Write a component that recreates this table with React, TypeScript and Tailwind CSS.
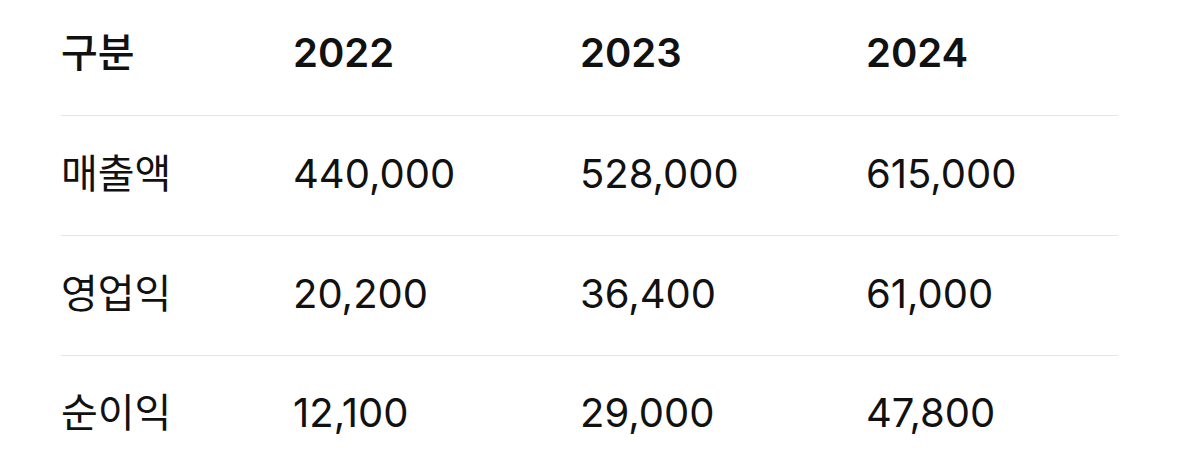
const rows = [
  { label: '매출액', values: ['440,000', '528,000', '615,000'] },
  { label: '영업익', values: ['20,200', '36,400', '61,000'] },
  { label: '순이익', values: ['12,100', '29,000', '47,800'] },
];

export default function App() {
  return (
    <div
      className="h-[475px] w-[1179px] bg-white px-[61px] text-[#111111]"
      style={{ fontFamily: 'Inter, "Noto Sans CJK KR", sans-serif' }}
    >
      <table className="w-full table-fixed border-collapse text-left text-[40px] leading-none">
        <colgroup>
          <col className="w-[232px]" />
          <col className="w-[287px]" />
          <col className="w-[286px]" />
          <col />
        </colgroup>
        <thead>
          <tr className="h-[115px] border-b border-[#e4e4e4]">
            <th className="pb-[8px] font-medium">구분</th>
            <th className="pb-[8px] font-semibold">2022</th>
            <th className="pb-[8px] font-semibold">2023</th>
            <th className="pb-[8px] font-semibold">2024</th>
          </tr>
        </thead>
        <tbody>
          {rows.map((row, i) => (
            <tr
              key={row.label}
              className={i < rows.length - 1 ? 'h-[120px] border-b border-[#e4e4e4]' : 'h-[119px]'}
            >
              <td className="pb-[3px] font-normal">{row.label}</td>
              {row.values.map((v) => (
                <td key={v} className="pb-[3px] font-normal">
                  {v}
                </td>
              ))}
            </tr>
          ))}
        </tbody>
      </table>
    </div>
  );
}
